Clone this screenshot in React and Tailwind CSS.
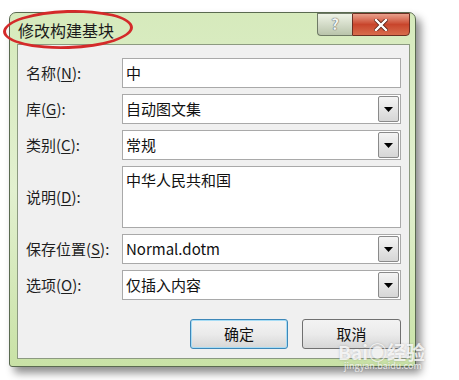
import React from "react";

const font = { fontFamily: '"Noto Sans CJK SC", "Noto Sans", sans-serif' };

const Arrow = () => (
  <div className="absolute right-px top-px bottom-px w-[21px] border border-[#8a8a8a] rounded-[2px] bg-gradient-to-b from-[#f4f4f4] to-[#d6d6d6] flex items-center justify-center">
    <svg width="9" height="5" viewBox="0 0 9 5">
      <path d="M0 0h9L4.5 5z" fill="#000" />
    </svg>
  </div>
);

const Row = ({ label, u, rest, value, select, tall }) => (
  <div className={`flex items-center ${tall ? "h-[62px]" : "h-[30px]"}`}>
    <div className="w-[96px] text-[15px] text-[#1e1e1e]">
      {label}(<span className="underline underline-offset-2">{u}</span>){rest}
    </div>
    <div
      className={`relative flex-1 h-full bg-white border border-[#a9a9a9] px-[3px] text-[15px] text-[#111] flex ${
        tall ? "items-start pt-[2px]" : "items-center"
      }`}
    >
      {value}
      {select && <Arrow />}
    </div>
  </div>
);

export default function App() {
  return (
    <div className="w-[459px] h-[380px] bg-white relative overflow-hidden" style={font}>
      <div className="pl-[9px] pt-[12px]">
        <div className="w-[407px] h-[355px] rounded-t-[7px] rounded-b-[3px] border border-[#5a6a50] bg-gradient-to-b from-[#d6eabc] via-[#e2f0cf] to-[#c9e2a6] shadow-[5px_6px_8px_rgba(0,0,0,0.45)] flex flex-col">
          <div className="h-[31px] flex items-start justify-between">
            <div className="pl-[8px] pt-[7px] text-[16px] leading-[20px] text-[#1a1a1a]">修改构建基块</div>
            <div className="flex mr-[5px]">
              <div className="w-[35px] h-[23px] border border-[#6f7a66] border-r-0 rounded-bl-[4px] bg-gradient-to-b from-[#eef3e6] to-[#b9c4ab] flex items-center justify-center text-[15px] font-bold text-[#f4f4f4] [text-shadow:0_0_1px_#555,0_0_1px_#555]">
                ?
              </div>
              <div className="w-[58px] h-[23px] border border-[#6c2e22] rounded-br-[4px] bg-gradient-to-b from-[#e9a08c] via-[#c8452c] to-[#d86c4c] flex items-center justify-center">
                <svg width="14" height="12" viewBox="0 0 14 12">
                  <path d="M2 1l10 10M12 1L2 11" stroke="#5a2418" strokeWidth="4" strokeLinecap="square" />
                  <path d="M2 1l10 10M12 1L2 11" stroke="#fff" strokeWidth="2.4" strokeLinecap="square" />
                </svg>
              </div>
            </div>
          </div>
          <div className="mx-[7px] mr-[5px] h-[315px] bg-[#f0f0f0] border border-[#8c9a80] px-[8px] pt-[13px] flex flex-col gap-[6px]">
            <Row label="名称" u="N" rest=":" value="中" />
            <Row label="库" u="G" rest=":" value="自动图文集" select />
            <Row label="类别" u="C" rest=":" value="常规" select />
            <Row label="说明" u="D" rest=":" value="中华人民共和国" tall />
            <Row label="保存位置" u="S" rest=":" value="Normal.dotm" select />
            <Row label="选项" u="O" rest=":" value="仅插入内容" select />
            <div className="flex justify-end gap-[14px] mt-[13px]">
              <button className="w-[98px] h-[30px] rounded-[3px] border border-[#3d87b8] shadow-[inset_0_0_0_1px_#a6dcf5] bg-gradient-to-b from-[#f3f3f3] via-[#ebebeb] to-[#d6d6d6] text-[15px] text-[#111]">
                确定
              </button>
              <button className="w-[99px] h-[30px] rounded-[3px] border border-[#707070] bg-gradient-to-b from-[#f3f3f3] via-[#ebebeb] to-[#d6d6d6] text-[15px] text-[#111]">
                取消
              </button>
            </div>
          </div>
        </div>
      </div>
      <div className="absolute left-[3px] top-[10px] w-[130px] h-[39px] rounded-[50%] border-[3px] border-[#d42a2a] -rotate-2" />
      <div className="absolute left-[338px] top-[342px] flex flex-col items-start leading-none text-white/80 [text-shadow:0_0_2px_rgba(120,120,120,0.5)]">
        <span className="text-[19px] font-bold leading-[19px]">Bai◉经验</span>
        <span className="text-[9px] leading-[10px] ml-[6px]">jingyan.baidu.com</span>
      </div>
    </div>
  );
}
